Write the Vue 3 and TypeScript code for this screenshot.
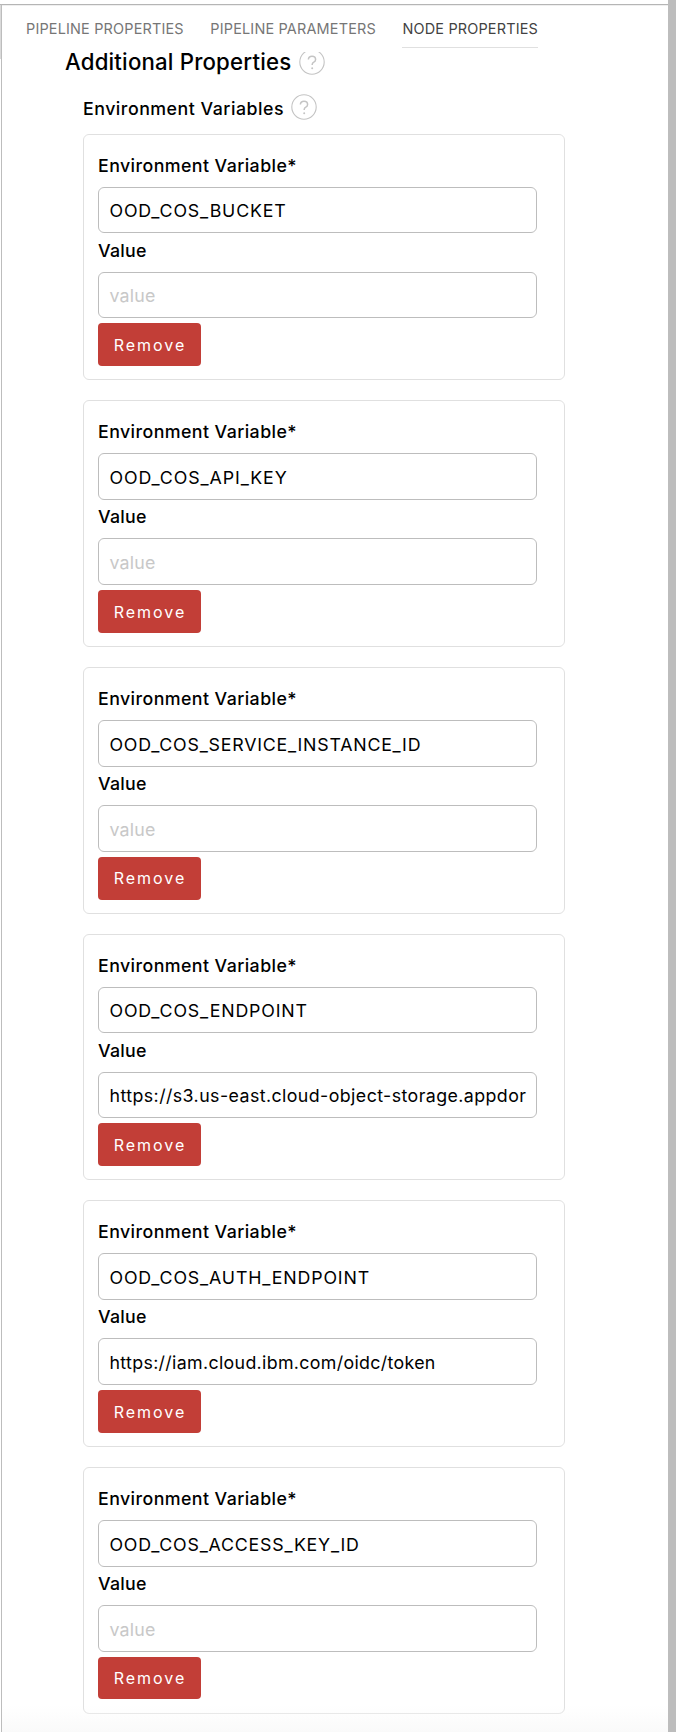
<script setup lang="ts">
interface EnvVar {
  name: string
  value: string
  tracking: 'wide' | 'mid' | 'snug'
}

const tabs = [
  { label: 'PIPELINE PROPERTIES', active: false },
  { label: 'PIPELINE PARAMETERS', active: false },
  { label: 'NODE PROPERTIES', active: true },
]

const envVars: EnvVar[] = [
  { name: 'OOD_COS_BUCKET', value: '', tracking: 'mid' },
  { name: 'OOD_COS_API_KEY', value: '', tracking: 'wide' },
  { name: 'OOD_COS_SERVICE_INSTANCE_ID', value: '', tracking: 'snug' },
  { name: 'OOD_COS_ENDPOINT', value: 'https://s3.us-east.cloud-object-storage.appdor', tracking: 'mid' },
  { name: 'OOD_COS_AUTH_ENDPOINT', value: 'https://iam.cloud.ibm.com/oidc/token', tracking: 'mid' },
  { name: 'OOD_COS_ACCESS_KEY_ID', value: '', tracking: 'snug' },
]
</script>

<template>
  <div class="window">
    <div class="gutter"></div>
    <main class="panel">
      <nav class="tabs">
        <a v-for="t in tabs" :key="t.label" class="tab" :class="{ active: t.active }">{{ t.label }}</a>
      </nav>
      <div class="content">
        <header class="section-head">
          <h2>Additional Properties</h2>
          <svg class="help" viewBox="0 0 26 26" width="26" height="26">
            <circle cx="13" cy="13" r="12.2" />
            <path d="M9.4 10.6c0-2 1.4-3.4 3.6-3.4s3.6 1.3 3.6 3.2c0 1.4-.7 2.1-1.8 2.8-1.2.7-1.6 1.3-1.6 2.4v.4" />
            <circle class="dot" cx="13.2" cy="19.2" r="1" />
          </svg>
        </header>
        <header class="group-head">
          <h3>Environment Variables</h3>
          <svg class="help" viewBox="0 0 26 26" width="26" height="26">
            <circle cx="13" cy="13" r="12.2" />
            <path d="M9.4 10.6c0-2 1.4-3.4 3.6-3.4s3.6 1.3 3.6 3.2c0 1.4-.7 2.1-1.8 2.8-1.2.7-1.6 1.3-1.6 2.4v.4" />
            <circle class="dot" cx="13.2" cy="19.2" r="1" />
          </svg>
        </header>
        <section v-for="v in envVars" :key="v.name" class="card">
          <label class="label">Environment Variable*</label>
          <div class="field name" :class="v.tracking">{{ v.name }}</div>
          <label class="label second">Value</label>
          <div class="field" :class="{ placeholder: !v.value, long: v.value.length > 40 }">{{ v.value || 'value' }}</div>
          <button class="remove" type="button">Remove</button>
        </section>
      </div>
    </main>
    <div class="scrollbar"></div>
  </div>
</template>

<style>
body {
  margin: 0;
  background: #fff;
}
</style>

<style scoped>
.window {
  display: flex;
  box-sizing: border-box;
  width: 676px;
  height: 1732px;
  overflow: hidden;
  font-family: Inter, 'Liberation Sans', sans-serif;
  color: #000;
}
.gutter {
  box-sizing: border-box;
  flex: none;
  width: 1px;
  height: 55px;
  margin-top: 4px;
  border-top: 1px solid #b5b5b5;
  background: #dadada;
}
.panel {
  box-sizing: border-box;
  width: 667px;
  height: 1728px;
  margin-top: 4px;
  border-top: 1px solid #b5b5b5;
  border-left: 1px solid #bdbdbd;
  background: linear-gradient(#fff 1700px, #fafafa);
  box-shadow: inset 0 1px #efefef;
}
.scrollbar {
  flex: none;
  width: 8px;
  background: #bdbdbd;
}
.tabs {
  display: flex;
  gap: 26.6px;
  height: 43px;
  padding-left: 24px;
}
.tab {
  box-sizing: border-box;
  height: 43px;
  font-size: 14.44px;
  line-height: 48px;
  letter-spacing: 0.17px;
  color: #767676;
  white-space: nowrap;
}
.tab.active {
  color: #424242;
  border-bottom: 1px solid #e0e0e0;
}
.content {
  width: 482px;
  padding-left: 81px;
  clip-path: inset(4px 0 0 0);
}
.section-head,
.group-head {
  display: flex;
  align-items: center;
}
.section-head {
  height: 28px;
  margin-left: -18px;
}
h2,
h3 {
  margin: 0;
  font-weight: 500;
  white-space: nowrap;
}
h2 {
  font-size: 22.22px;
  line-height: 28px;
  letter-spacing: 0.18px;
}
h3 {
  padding-top: 4px;
  font-size: 17.78px;
  line-height: 24px;
  letter-spacing: 0.51px;
}
.help {
  flex: none;
  margin-left: 7.3px;
  fill: none;
  stroke: #c4c4c4;
  stroke-width: 1.1;
}
.help path {
  stroke-width: 1.5;
}
.help .dot {
  fill: #c4c4c4;
  stroke: none;
}
.group-head {
  height: 26px;
  margin: 17.67px 0 14px;
}
.card {
  box-sizing: border-box;
  height: 246.8px;
  margin-bottom: 19.87px;
  padding: 18.9px 27px 0 14px;
  border: 1px solid #e0e0e0;
  border-radius: 6px;
}
.label {
  display: block;
  height: 24px;
  margin-bottom: 9.2px;
  font-size: 17.78px;
  font-weight: 500;
  line-height: 24px;
  letter-spacing: 0.43px;
}
.label.second {
  margin: 5.35px 0 9.15px;
  letter-spacing: 0.25px;
}
.field {
  box-sizing: border-box;
  height: 46.5px;
  padding: 0.7px 10.5px 0;
  border: 1px solid #bdbdbd;
  border-radius: 6px;
  font-size: 17.78px;
  line-height: 45px;
  letter-spacing: 0.34px;
  white-space: nowrap;
  overflow: hidden;
}
.field.long {
  letter-spacing: 0.43px;
}
.field.wide {
  letter-spacing: 0.91px;
}
.field.mid {
  letter-spacing: 0.85px;
}
.field.snug {
  letter-spacing: 0.79px;
}
.field.placeholder {
  color: #c8c8c8;
  letter-spacing: 0.2px;
}
.remove {
  display: block;
  width: 103px;
  height: 42.8px;
  margin-top: 5.2px;
  padding: 0.5px 0 0;
  border: 0;
  border-radius: 4px;
  background: #c23e37;
  color: #fff;
  font: 400 16px/42px Inter, 'Liberation Sans', sans-serif;
  letter-spacing: 1.95px;
  text-indent: 1px;
}
</style>
